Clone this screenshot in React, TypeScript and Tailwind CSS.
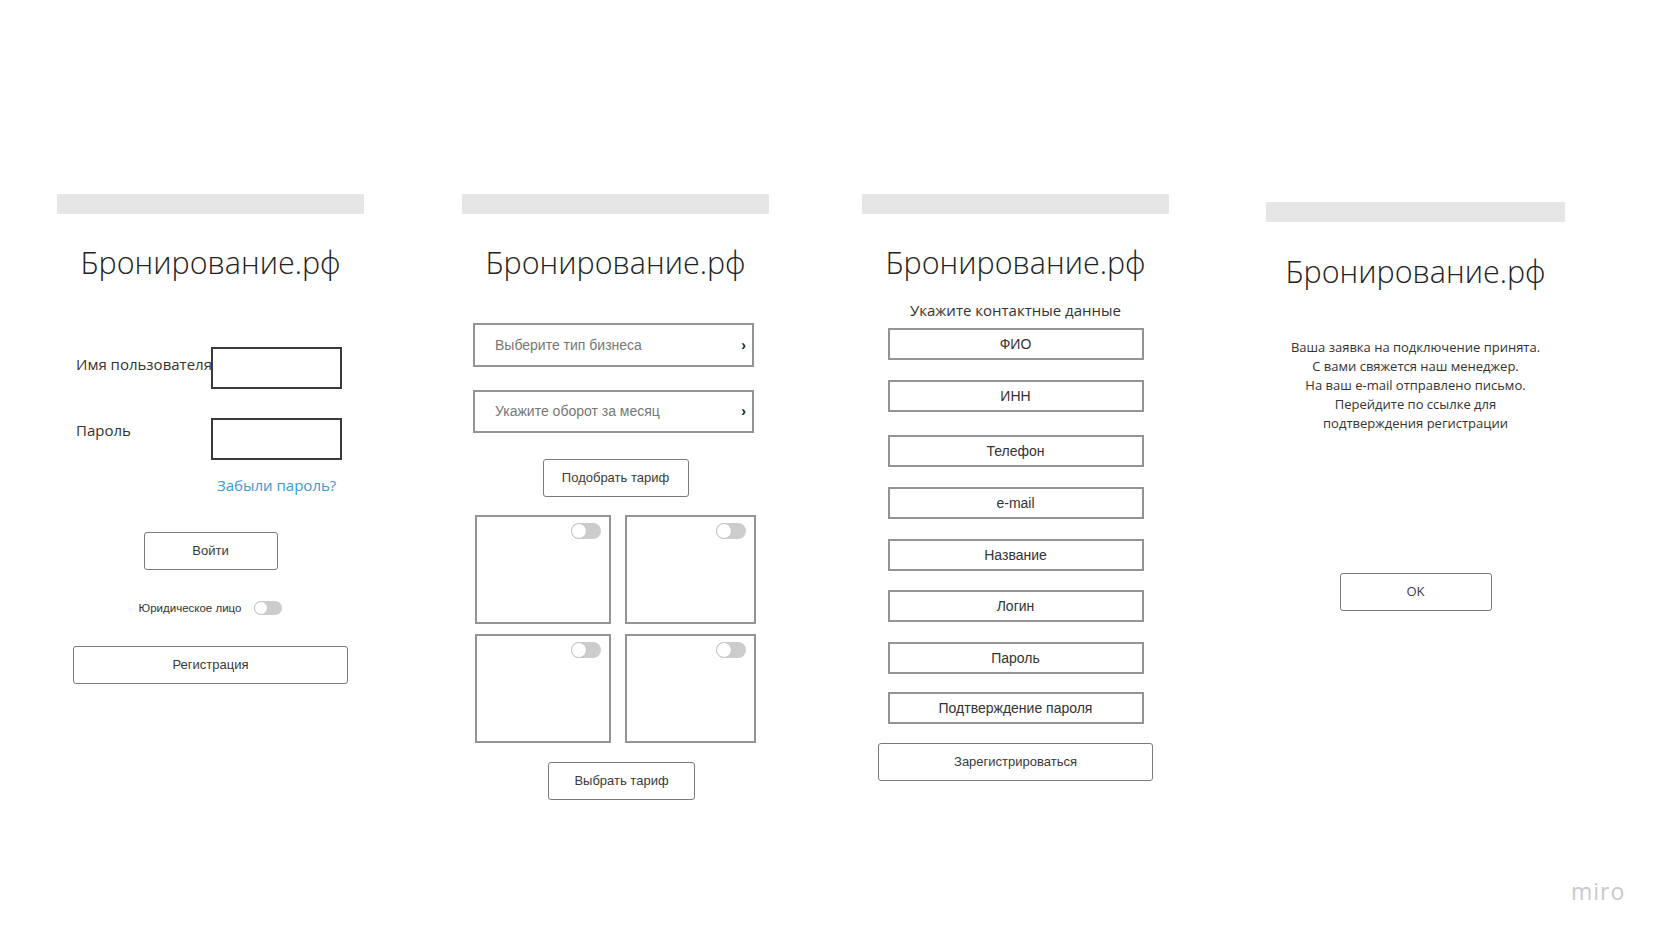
import React from "react";

const OPEN = "font-['Open_Sans',_'Liberation_Sans',_sans-serif]";
const SANS = "font-['Liberation_Sans',_Arial,_sans-serif]";

function Bar() {
  return <div className="h-[20px] w-full bg-[#e6e6e6]" />;
}

function Title({ mt }: { mt: string }) {
  return (
    <div
      className={`${OPEN} ${mt} whitespace-nowrap text-center text-[30.5px] font-light leading-[30px] text-[#222]`}
    >
      Бронирование.рф
    </div>
  );
}

function Toggle({ big }: { big?: boolean }) {
  return (
    <div
      className={`${big ? "h-[16px] w-[30px]" : "h-[14px] w-[28px]"} flex items-center rounded-full bg-[#cccccc]`}
    >
      <div
        className={`${big ? "h-[16px] w-[16px]" : "h-[14px] w-[14px]"} rounded-full border border-[#c4c4c4] bg-white`}
      />
    </div>
  );
}

function OutlineButton({ label, cls }: { label: string; cls: string }) {
  return (
    <div
      className={`${SANS} ${cls} flex h-[38px] items-center justify-center rounded-[3px] border-[1.5px] border-[#7a7a7a] bg-white text-[13px] text-[#3a3a3a]`}
    >
      {label}
    </div>
  );
}

function Panel1() {
  return (
    <div className="flex w-[307px] flex-col">
      <Bar />
      <Title mt="mt-[33px]" />
      <div className="mt-[70px] flex items-start pl-[19px]">
        <div className={`${OPEN} mt-[6px] w-[135px] whitespace-nowrap text-[15px] leading-[22px] text-[#333]`}>
          Имя пользователя
        </div>
        <div className="h-[42px] w-[131px] border-2 border-[#3a3a3a]" />
      </div>
      <div className="mt-[29px] flex items-start pl-[19px]">
        <div className={`${OPEN} mt-[1px] w-[135px] text-[15px] leading-[22px] text-[#333]`}>
          Пароль
        </div>
        <div className="h-[42px] w-[131px] border-2 border-[#3a3a3a]" />
      </div>
      <div className={`${OPEN} ml-[160px] mt-[14px] text-[15px] leading-[22px] text-[#3b97d8]`}>
        Забыли пароль?
      </div>
      <OutlineButton label="Войти" cls="mt-[36px] w-[134px] self-center" />
      <div className="mt-[31px] flex items-center justify-center gap-[13px]">
        <span className={`${SANS} text-[11.5px] leading-[14px] text-[#333]`}>Юридическое лицо</span>
        <Toggle />
      </div>
      <OutlineButton label="Регистрация" cls="mt-[31px] w-[275px] self-center" />
    </div>
  );
}

function Select({ label, cls }: { label: string; cls: string }) {
  return (
    <div
      className={`${SANS} ${cls} ml-[11px] flex w-[281px] items-center justify-between border-2 border-[#949494] pl-[20px] pr-[6px] text-[14px] text-[#777]`}
    >
      <span>{label}</span>
      <span className="text-[14px] font-bold text-[#222]">›</span>
    </div>
  );
}

function TariffBox({ w }: { w: string }) {
  return (
    <div className={`${w} flex h-[109px] justify-end border-2 border-[#949494] pr-[8px] pt-[6px]`}>
      <Toggle big />
    </div>
  );
}

function Panel2() {
  return (
    <div className="flex w-[307px] flex-col">
      <Bar />
      <Title mt="mt-[33px]" />
      <Select label="Выберите тип бизнеса" cls="mt-[46px] h-[44px]" />
      <Select label="Укажите оборот за месяц" cls="mt-[23px] h-[43px]" />
      <OutlineButton label="Подобрать тариф" cls="mt-[26px] w-[146px] self-center" />
      <div className="ml-[13px] mt-[18px] grid grid-cols-[136px_131px] gap-x-[14px] gap-y-[10px]">
        <TariffBox w="w-[136px]" />
        <TariffBox w="w-[131px]" />
        <TariffBox w="w-[136px]" />
        <TariffBox w="w-[131px]" />
      </div>
      <OutlineButton label="Выбрать тариф" cls="ml-[86px] mt-[19px] w-[147px]" />
    </div>
  );
}

const FIELDS: { label: string; mt: string }[] = [
  { label: "ФИО", mt: "mt-[8px]" },
  { label: "ИНН", mt: "mt-[20px]" },
  { label: "Телефон", mt: "mt-[23px]" },
  { label: "e-mail", mt: "mt-[20px]" },
  { label: "Название", mt: "mt-[20px]" },
  { label: "Логин", mt: "mt-[19px]" },
  { label: "Пароль", mt: "mt-[20px]" },
  { label: "Подтверждение пароля", mt: "mt-[18px]" },
];

function Panel3() {
  return (
    <div className="flex w-[307px] flex-col">
      <Bar />
      <Title mt="mt-[33px]" />
      <div className={`${OPEN} mt-[23px] text-center text-[15px] leading-[20px] text-[#333]`}>
        Укажите контактные данные
      </div>
      {FIELDS.map((f) => (
        <div
          key={f.label}
          className={`${SANS} ${f.mt} flex h-[32px] w-[256px] items-center justify-center self-center border-2 border-[#949494] text-[14px] text-[#333]`}
        >
          {f.label}
        </div>
      ))}
      <OutlineButton label="Зарегистрироваться" cls="mt-[19px] w-[275px] self-center" />
    </div>
  );
}

function Panel4() {
  return (
    <div className="mt-[8px] flex w-[299px] flex-col">
      <Bar />
      <Title mt="mt-[34px]" />
      <div className={`${OPEN} mt-[52px] text-center text-[13px] leading-[19px] text-[#333]`}>
        <div>Ваша заявка на подключение принята.</div>
        <div>С вами свяжется наш менеджер.</div>
        <div>На ваш e-mail отправлено письмо.</div>
        <div>Перейдите по ссылке для</div>
        <div>подтверждения регистрации</div>
      </div>
      <OutlineButton label="OK" cls={`mt-[140px] w-[152px] self-center ${OPEN}`} />
    </div>
  );
}

export default function App() {
  return (
    <div className="relative h-[939px] w-[1663px] overflow-hidden bg-white">
      <div className="flex items-start pl-[57px] pt-[194px]">
        <Panel1 />
        <div className="ml-[98px]">
          <Panel2 />
        </div>
        <div className="ml-[93px]">
          <Panel3 />
        </div>
        <div className="ml-[97px]">
          <Panel4 />
        </div>
      </div>
      <div
        className={`${OPEN} absolute left-[1571px] top-[877px] text-[23px] font-medium leading-[28px] tracking-[1px] text-[#c9c9d1]`}
      >
        miro
      </div>
    </div>
  );
}
